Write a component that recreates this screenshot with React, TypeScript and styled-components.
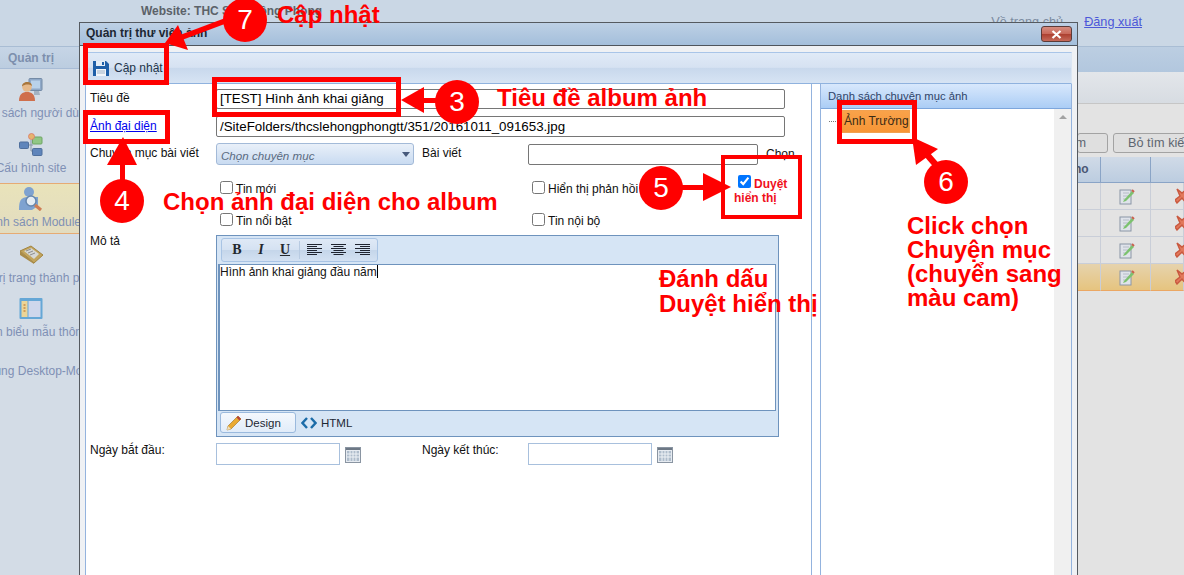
import React from "react";
import styled, { createGlobalStyle, css } from "styled-components";

const SANS = `"Liberation Sans", Arial, sans-serif`;
const SERIF = `"Liberation Serif", serif`;
const RED = "#ff0000";

const Global = createGlobalStyle`
  html, body { margin: 0; padding: 0; background: #e3e3e3; overflow: hidden; }
  body { font-family: ${SANS}; font-size: 12px; color: #000; }
`;

const Page = styled.div`
  position: relative;
  width: 1184px;
  height: 575px;
  overflow: hidden;
  display: flex;
  flex-direction: column;
`;

/* ---------- dimmed page behind the dialog ---------- */
const Header = styled.header`
  height: 47px;
  flex: none;
  background: #cad7e5;
  border-bottom: 1px solid #a9bdd4;
  box-sizing: border-box;
  display: flex;
  align-items: flex-start;
  font-size: 12px;
`;
const SiteName = styled.div`
  margin: 4px 0 0 141px;
  font-weight: bold;
  color: #5c6269;
`;
const HeaderLinks = styled.div`
  margin: 15px 0 0 auto;
  padding-right: 42px;
  display: flex;
  gap: 21px;
`;
const HeaderLink = styled.a`
  color: #4c58d8;
  text-decoration: underline;
  font-size: 12.7px;
`;
const HomeLink = styled(HeaderLink)`
  color: #7b8ba0;
  text-decoration: none;
`;
const Lower = styled.div`
  flex: 1;
  display: flex;
  min-height: 0;
`;
const Sidebar = styled.aside`
  width: 79px;
  flex: none;
  background: #d3dce6;
  overflow: hidden;
`;
const SideTab = styled.div`
  height: 22px;
  padding: 4px 0 0 8px;
  box-sizing: border-box;
  background: linear-gradient(#c6d5e6, #bccde0);
  border-bottom: 1px solid #a8bcd6;
  color: #7d8fad;
  font-weight: bold;
  font-size: 12px;
`;
const SideItem = styled.div<{ $h: number; $pt?: number; $active?: boolean }>`
  width: 62px;
  height: ${(p) => p.$h}px;
  display: flex;
  flex-direction: column;
  align-items: center;
  box-sizing: border-box;
  padding-top: ${(p) => p.$pt ?? 9}px;
  position: relative;
  ${(p) =>
    p.$active &&
    css`
      z-index: 0;
      &::before {
        content: "";
        position: absolute;
        z-index: -1;
        left: 0;
        top: 0;
        bottom: 0;
        width: 79px;
        box-sizing: border-box;
        background: linear-gradient(#e9e3ba, #e2dcc0);
        border-top: 1px solid #e6ab74;
        border-bottom: 1px solid #e6ab74;
      }
    `}
`;
const SideLabel = styled.span`
  white-space: nowrap;
  color: #7f90b5;
  font-size: 12px;
  line-height: 14px;
  margin-top: 4px;
  flex: none;
`;
const SideIcon = styled.svg`
  width: 24px;
  height: 24px;
  flex: none;
  margin-left: -1px;
`;
const Main = styled.main`
  flex: 1;
  min-width: 0;
  display: flex;
  flex-direction: column;
  align-items: flex-end;
  background: #e3e3e3;
`;
const BlueBar = styled.div`
  align-self: stretch;
  height: 25px;
  flex: none;
  background: linear-gradient(#bccee2, #b2c7de);
`;
const GreyBar = styled.div`
  align-self: stretch;
  height: 31px;
  flex: none;
  background: linear-gradient(#e3e6ea, #d7dce2);
  border-bottom: 1px solid #c6c6c6;
`;
const Tools = styled.div`
  display: flex;
  gap: 5px;
  margin-top: 29px;
  width: 107px;
  flex: none;
`;
const GhostButton = styled.div`
  height: 20px;
  flex: none;
  box-sizing: border-box;
  border: 1px solid #a3a3a3;
  border-radius: 3px;
  background: #dfdfdf;
  color: #5d6570;
  font-size: 12.7px;
  line-height: 18px;
  white-space: nowrap;
`;
const FindBtn = styled(GhostButton)`
  width: 31px;
  display: flex;
  justify-content: flex-end;
  padding-right: 21px;
`;
const ClearBtn = styled(GhostButton)`
  width: 90px;
  padding-left: 14px;
  overflow: hidden;
`;
const Table = styled.div`
  width: 107px;
  margin-top: 4px;
  flex: none;
  display: grid;
  grid-template-columns: 24px 50px 33px;
`;
const HeadCell = styled.div`
  height: 26px;
  box-sizing: border-box;
  background: linear-gradient(#d0dae7, #bccde0);
  border-right: 1px solid #8aa4c6;
  border-bottom: 1px solid #8aa4c6;
  color: #4a5873;
  font-weight: bold;
  font-size: 12px;
  line-height: 25px;
  overflow: hidden;
  text-indent: -3px;
  &:nth-child(3) { border-right: 0; }
`;
const Cell = styled.div<{ $sel?: boolean }>`
  height: 27px;
  box-sizing: border-box;
  display: flex;
  align-items: center;
  border-right: 1px solid #c9ced8;
  border-bottom: 1px solid ${(p) => (p.$sel ? "#eba763" : "#c9ced8")};
  background: ${(p) => (p.$sel ? "linear-gradient(#e6d3ad, #e6c47f)" : "#e3e3e3")};
`;
const EditIcon = styled.svg`
  width: 16px;
  height: 17px;
  margin-left: 18px;
`;
const DelIcon = styled.svg`
  width: 16px;
  height: 16px;
  margin-left: 24px;
  flex: none;
`;

/* ---------- dialog ---------- */
const Dialog = styled.section`
  position: absolute;
  left: 79px;
  top: 22px;
  width: 999px;
  height: 560px;
  box-sizing: border-box;
  border: 1px solid #555a60;
  display: flex;
  flex-direction: column;
  background: #eff1f4;
`;
const TitleBar = styled.div`
  height: 23px;
  flex: none;
  box-sizing: border-box;
  padding: 3px 6px 0 6px;
  display: flex;
  align-items: flex-start;
  justify-content: space-between;
  background: linear-gradient(#bdd0e5, #a4bfdb);
  border-bottom: 1px solid #4f555c;
`;
const DialogTitle = styled.div`
  font-weight: bold;
  font-size: 12px;
  line-height: 14px;
  color: #1c2733;
`;
const CloseBtn = styled.div`
  width: 31px;
  height: 16px;
  margin-right: -1px;
  box-sizing: border-box;
  border: 1px solid #5c3b38;
  border-radius: 3px;
  background: linear-gradient(#d58d80 0%, #c9695a 48%, #ad4030 52%, #c56a5a 100%);
  display: flex;
  align-items: center;
  justify-content: center;
`;
const DialogInner = styled.div`
  flex: 1;
  min-height: 0;
  margin: 6px 5px 0 5px;
  display: flex;
  flex-direction: column;
`;
const ToolBar = styled.div`
  height: 32px;
  flex: none;
  box-sizing: border-box;
  border-top: 1px solid #a9c5e8;
  border-left: 1px solid #dbe6f3;
  border-right: 1px solid #dbe6f3;
  border-bottom: 1px solid #8fb2de;
  background: linear-gradient(#e0eaf7 0%, #d6e2f2 48%, #c8d8ec 50%, #d7e4f4 100%);
  display: flex;
  align-items: center;
  padding-left: 7px;
  gap: 5px;
  font-size: 12px;
  color: #23344a;
`;
const SaveIcon = styled.svg`
  width: 16px;
  height: 16px;
  margin-top: -1px;
`;
const Columns = styled.div`
  flex: 1;
  min-height: 0;
  display: flex;
  background: #fff;
  border-left: 1px solid #94b3de;
  border-right: 1px solid #94b3de;
`;
const FormPane = styled.div`
  width: 726px;
  flex: none;
  box-sizing: border-box;
  border-right: 1px solid #94b3de;
  padding: 5px 0 0 4px;
  display: flex;
  flex-direction: column;
`;
const Row = styled.div<{ $h: number; $mt?: number }>`
  display: grid;
  grid-template-columns: 126px 206px 106px 206px auto;
  height: ${(p) => p.$h}px;
  margin-top: ${(p) => p.$mt ?? 0}px;
  flex: none;
  align-items: start;
`;
const Label = styled.div<{ $off?: number }>`
  font-size: 12px;
  line-height: 16px;
  color: #101010;
  white-space: nowrap;
  margin-top: ${(p) => p.$off ?? 2}px;
`;
const LinkLabel = styled(Label)`
  color: #0000ee;
  text-decoration: underline;
`;
const TextInput = styled.div<{ $h: number }>`
  height: ${(p) => p.$h}px;
  box-sizing: border-box;
  border: 1px solid #767676;
  border-radius: 2px;
  padding: 0 3px;
  font-size: 13.333px;
  line-height: ${(p) => p.$h - 2}px;
  color: #000;
  white-space: nowrap;
`;
const WideCell = styled.div`
  grid-column: 2 / span 4;
  width: 569px;
`;
const Select = styled.div`
  width: 198px;
  height: 22px;
  box-sizing: border-box;
  border: 1px solid #a3bad8;
  border-radius: 3px;
  background: linear-gradient(#e9f0f9, #c9dbf1);
  font-style: italic;
  font-size: 11.6px;
  line-height: 24px;
  color: #5a6a80;
  padding-left: 4px;
  position: relative;
  &::after {
    content: "";
    position: absolute;
    right: 3px;
    top: 8px;
    border: 4px solid transparent;
    border-top: 5px solid #475a7c;
    border-bottom: 0;
  }
`;
const PostPick = styled.div`
  grid-column: 4 / span 2;
  display: flex;
  align-items: flex-start;
  gap: 8px;
  margin-top: 1px;
`;
const PostInput = styled(TextInput)`
  width: 230px;
  flex: none;
`;
const Check = styled.label`
  display: flex;
  align-items: flex-start;
  gap: 3px;
  padding-left: 4px;
  font-size: 12px;
  line-height: 16px;
  white-space: nowrap;
  color: #101010;
  input { margin: 2px 0 0; width: 13px; height: 13px; flex: none; }
  span { padding-top: 2px; }
`;
const ApproveCell = styled.div`
  font-size: 12px;
  line-height: 14px;
  color: #f0101c;
  font-weight: bold;
  margin-top: -4px;
  width: 60px;
  input { margin: 0 3px 0 4px; width: 13px; height: 13px; vertical-align: baseline; }
`;
const Editor = styled.div`
  grid-column: 2 / span 4;
  width: 563px;
  height: 202px;
  box-sizing: border-box;
  border: 1px solid #6e93bd;
  background: #d6e5f5;
  display: flex;
  flex-direction: column;
`;
const EditorTools = styled.div`
  width: 157px;
  height: 24px;
  margin: 2px 0 2px 4px;
  flex: none;
  box-sizing: border-box;
  border: 1px solid #a9c4e4;
  border-radius: 3px;
  background: linear-gradient(#dfe9f6 0%, #d5e2f2 48%, #c5d6ea 52%, #d3e1f2 100%);
  display: flex;
  align-items: center;
  padding-left: 3px;
`;
const EdBtn = styled.span`
  width: 24px;
  flex: none;
  font-family: ${SERIF};
  font-size: 14px;
  font-weight: bold;
  text-align: center;
  color: #24282e;
`;
const Sep = styled.span`
  width: 1px;
  height: 18px;
  background: #b8cbe2;
  margin: 0 7px 0 2px;
  flex: none;
`;
const AlignIcon = styled.svg`
  width: 15px;
  height: 12px;
  margin-right: 9px;
  flex: none;
`;
const EditArea = styled.div`
  flex: 1;
  margin: 0 2px 0 1px;
  background: #fff;
  border: 1px solid #6e93bd;
  border-left-width: 2px;
  font-size: 12px;
  line-height: 14px;
  color: #141414;
`;
const Caret = styled.span`
  display: inline-block;
  width: 1px;
  height: 13px;
  background: #000;
  vertical-align: -2px;
`;
const ModeBar = styled.div`
  height: 25px;
  flex: none;
  display: flex;
  align-items: flex-start;
  padding: 1px 0 0 3px;
  gap: 5px;
  box-sizing: border-box;
`;
const ModeDesign = styled.div`
  width: 76px;
  height: 21px;
  box-sizing: border-box;
  border: 1px solid #9ab9dd;
  border-radius: 3px;
  background: linear-gradient(#f4f8fd, #e1ecf9);
  display: flex;
  align-items: center;
  gap: 3px;
  padding-left: 5px;
  color: #1c2733;
  font-size: 11.5px;
`;
const ModeHtml = styled.div`
  display: flex;
  align-items: center;
  gap: 4px;
  height: 21px;
  color: #1c2733;
  font-size: 11.5px;
`;
const DateCell = styled.div`
  display: flex;
  align-items: flex-start;
  gap: 5px;
`;
const DateInput = styled.div`
  width: 124px;
  height: 22px;
  box-sizing: border-box;
  border: 1px solid #a8c0dd;
  background: #fff;
`;
const CalIcon = styled.svg`
  width: 16px;
  height: 16px;
  margin-top: 4px;
  flex: none;
`;
const CatPane = styled.div`
  width: 251px;
  margin-left: 8px;
  flex: none;
  box-sizing: border-box;
  border-left: 1px solid #94b3de;
  display: flex;
  flex-direction: column;
`;
const CatHead = styled.div`
  height: 25px;
  flex: none;
  box-sizing: border-box;
  background: linear-gradient(#d8e8fc, #abcdf5);
  border-bottom: 1px solid #7da6dc;
  padding: 6px 0 0 7px;
  font-size: 11.25px;
  line-height: 13px;
  color: #2f4368;
`;
const CatBody = styled.div`
  flex: 1;
  display: flex;
  min-height: 0;
`;
const Tree = styled.div`
  flex: 1;
  display: flex;
  align-items: flex-start;
  padding: 1px 0 0 8px;
`;
const Dots = styled.span`
  width: 11px;
  margin-top: 11px;
  border-top: 1px dotted #777;
  flex: none;
`;
const Node = styled.div`
  width: 70px;
  height: 23px;
  box-sizing: border-box;
  background: linear-gradient(#f9a24a, #f79636);
  border: 1px solid #f2a14f;
  font-size: 12px;
  line-height: 21px;
  padding-left: 3px;
  color: #3b2a14;
  white-space: nowrap;
`;
const Scroll = styled.div`
  width: 17px;
  flex: none;
  background: #f0f0f0;
  position: relative;
  &::before {
    content: "";
    position: absolute;
    left: 5px;
    top: 6px;
    border: 4px solid transparent;
    border-bottom: 4px solid #a3a3a3;
    border-top: 0;
  }
`;

/* ---------- red annotations ---------- */
const Marks = styled.svg`
  position: absolute;
  inset: 0;
  width: 1184px;
  height: 575px;
  pointer-events: none;
`;
const RedBox = styled.div<{ $x: number; $y: number; $w: number; $h: number; $b?: number }>`
  position: absolute;
  left: ${(p) => p.$x}px;
  top: ${(p) => p.$y}px;
  width: ${(p) => p.$w}px;
  height: ${(p) => p.$h}px;
  box-sizing: border-box;
  border: ${(p) => p.$b ?? 5}px solid ${RED};
`;
const Bubble = styled.div<{ $x: number; $y: number }>`
  position: absolute;
  left: ${(p) => p.$x - 22}px;
  top: ${(p) => p.$y - 22}px;
  width: 44px;
  height: 44px;
  border-radius: 50%;
  background: ${RED};
  color: #fff;
  font-size: 28px;
  line-height: 44px;
  text-align: center;
`;
const Note = styled.div<{ $x: number; $y: number; $lh?: number }>`
  position: absolute;
  left: ${(p) => p.$x}px;
  top: ${(p) => p.$y}px;
  color: ${RED};
  font-weight: bold;
  font-size: 24px;
  line-height: ${(p) => p.$lh ?? 26}px;
  white-space: pre;
`;

/* ---------- icons ---------- */
const UserIcon = () => (
  <SideIcon viewBox="0 0 24 24">
    <rect x="10" y="0.500" width="13" height="12" rx="1" fill="#8fa9c8" stroke="#748ba6" />
    <rect x="12" y="2.500" width="9" height="8" fill="#b9d2ea" />
    <path d="M15 13h5l1 4h-6z" fill="#a3b2c2" />
    <circle cx="8" cy="9" r="4.800" fill="#e6b98a" />
    <path d="M3 8.500C3 2.500 13 2.500 13 8 10 6 6 6 3 8.500z" fill="#a8763c" />
    <path d="M0 23c0-7 3.500-9 8-9s8 2 8 9z" fill="#cf6f4c" />
  </SideIcon>
);
const NetIcon = () => (
  <SideIcon viewBox="0 0 24 24">
    <path d="M9 12h5M12 7v11M12 18h2" stroke="#8595a8" fill="none" />
    <rect x="0.500" y="9" width="9" height="6.500" rx="1" fill="#5f85bb" stroke="#4f6f9c" />
    <rect x="13.500" y="4" width="9.500" height="7" rx="1" fill="#90c785" stroke="#6fa564" />
    <rect x="13.500" y="15.500" width="9.500" height="7" rx="1" fill="#5f85bb" stroke="#4f6f9c" />
    <circle cx="12.500" cy="3.500" r="3" fill="#e6b46e" stroke="#d9776a" strokeWidth=".8" />
  </SideIcon>
);
const ModuleIcon = () => (
  <SideIcon viewBox="0 0 24 24">
    <circle cx="10" cy="5" r="5" fill="#7ea2d0" />
    <path d="M0 23c0-8 1-13 9-13h10v9l-6 4z" fill="#7ea2d0" />
    <circle cx="12" cy="14" r="5" fill="#e4ecf4" stroke="#6586ad" strokeWidth="1.500" />
    <path d="M16 18l6 5" stroke="#cf7d55" strokeWidth="3.200" />
  </SideIcon>
);
const TrayIcon = () => (
  <SideIcon viewBox="0 0 24 24">
    <path d="M1 8L12 3l12 9-9 8z" fill="#c2a45c" stroke="#a28540" />
    <path d="M5 8l7-3 8 6-5 5z" fill="#d6d8d6" />
    <path d="M7 8l5-2M9 10l5-2M11 12l5-2" stroke="#8d8d8d" />
    <path d="M1 8v4l14 9v-1z" fill="#a98b48" />
  </SideIcon>
);
const WindowIcon = () => (
  <SideIcon viewBox="0 0 24 24">
    <rect x="0.500" y="1" width="23" height="21" rx="1" fill="#65a7d6" />
    <rect x="2.500" y="4" width="6" height="16" fill="#ecd597" />
    <rect x="9.500" y="4" width="12" height="16" fill="#ced7ec" />
    <path d="M4.500 8h2M4.500 11h2M4.500 14h2" stroke="#c98a46" strokeWidth="1.400" />
  </SideIcon>
);
const Edit = () => (
  <EditIcon viewBox="0 0 16 17">
    <rect x="1" y="2" width="11" height="14" fill="#dfe3ea" stroke="#8a96a6" />
    <path d="M4 5h6M4 8h6M4 11h4" stroke="#b5bcc8" />
    <path d="M5 12l8-9 2 2-8 8-3 1z" fill="#7cc26f" />
    <path d="M13 2l2 2" stroke="#c9614c" strokeWidth="2" />
  </EditIcon>
);
const Del = () => (
  <DelIcon viewBox="0 0 16 16">
    <path d="M2 1l5 4 5-4 3 3-5 5 4 5-3 1-4-5-5 5-2-3 5-4z" fill="#e2795c" stroke="#c9593f" strokeWidth="1.400" />
  </DelIcon>
);
const Cal = () => (
  <CalIcon viewBox="0 0 16 16">
    <rect x=".5" y=".5" width="15" height="15" fill="#e6ebf1" stroke="#8a95a2" />
    <rect x="1" y="1" width="14" height="2" fill="#6d7885" />
    <path d="M2 4h12v10H2z" fill="#aebccb" />
    <path d="M5 4v10M8 4v10M11 4v10M2 7h12M2 10h12" stroke="#eef2f6" />
  </CalIcon>
);
const Align = ({ kind }: { kind: "l" | "c" | "r" }) => {
  const lines = [15, 10, 15, 10, 15, 10];
  return (
    <AlignIcon viewBox="0 0 15 12">
      {lines.map((w, i) => {
        const x = kind === "l" ? 0 : kind === "r" ? 15 - w : (15 - w) / 2;
        return <rect key={i} x={x} y={i * 2} width={w} height="1" fill="#1f2430" />;
      })}
    </AlignIcon>
  );
};

const tableRows = [false, false, false, true];

export default function App() {
  return (
    <Page>
      <Global />
      <Header>
        <SiteName>Website: THC S Lê Hồng Phòng</SiteName>
        <HeaderLinks>
          <HomeLink>Về trang chủ</HomeLink>
          <HeaderLink>Đăng xuất</HeaderLink>
        </HeaderLinks>
      </Header>
      <Lower>
        <Sidebar>
          <SideTab>Quản trị</SideTab>
          <SideItem $h={55}>
            <UserIcon />
            <SideLabel>Danh sách người dùng</SideLabel>
          </SideItem>
          <SideItem $h={59}>
            <NetIcon />
            <SideLabel>Cấu hình site</SideLabel>
          </SideItem>
          <SideItem $h={51} $pt={4} $active>
            <ModuleIcon />
            <SideLabel>Danh sách Module</SideLabel>
          </SideItem>
          <SideItem $h={54}>
            <TrayIcon />
            <SideLabel>Quản trị trang thành phần</SideLabel>
          </SideItem>
          <SideItem $h={54}>
            <WindowIcon />
            <SideLabel>Quản biểu mẫu thông</SideLabel>
          </SideItem>
          <SideItem $h={40} $pt={18}>
            <SideLabel>Ứng dụng Desktop-Mobile</SideLabel>
          </SideItem>
        </Sidebar>
        <Main>
          <BlueBar />
          <GreyBar />
          <Tools>
            <FindBtn>Tìm kiếm</FindBtn>
            <ClearBtn>Bỏ tìm kiếm</ClearBtn>
          </Tools>
          <Table>
            <HeadCell>ho</HeadCell>
            <HeadCell />
            <HeadCell />
            {tableRows.map((sel, i) => (
              <React.Fragment key={i}>
                <Cell $sel={sel} />
                <Cell $sel={sel}>
                  <Edit />
                </Cell>
                <Cell $sel={sel}>
                  <Del />
                </Cell>
              </React.Fragment>
            ))}
          </Table>
        </Main>
      </Lower>

      <Dialog>
        <TitleBar>
          <DialogTitle>Quản trị thư viện ảnh</DialogTitle>
          <CloseBtn>
            <svg width="11" height="9" viewBox="0 0 11 9">
              <path d="M1.5 1l8 7M9.5 1l-8 7" stroke="#fff" strokeWidth="2.2" />
            </svg>
          </CloseBtn>
        </TitleBar>
        <DialogInner>
          <ToolBar>
            <SaveIcon viewBox="0 0 16 16">
              <path d="M0 1h13l3 3v12H0z" fill="#1f5fa8" />
              <rect x="3" y="1" width="9" height="5" fill="#e6eef7" />
              <rect x="9" y="2" width="2" height="3" fill="#1f5fa8" />
              <rect x="3" y="9" width="10" height="7" fill="#f3f6fa" />
              <path d="M4 11h8M4 13h8" stroke="#9fb2c6" />
            </SaveIcon>
            Cập nhật
          </ToolBar>
          <Columns>
            <FormPane>
              <Row $h={20}>
                <Label $off={1}>Tiêu đề</Label>
                <WideCell>
                  <TextInput $h={20}>[TEST] Hình ảnh khai giảng</TextInput>
                </WideCell>
              </Row>
              <Row $h={21} $mt={7}>
                <LinkLabel>Ảnh đại diện</LinkLabel>
                <WideCell>
                  <TextInput $h={21}>/SiteFolders/thcslehongphongtt/351/20161011_091653.jpg</TextInput>
                </WideCell>
              </Row>
              <Row $h={22} $mt={6}>
                <Label>Chuyên mục bài viết</Label>
                <Select>Chọn chuyên mục</Select>
                <Label>Bài viết</Label>
                <PostPick>
                  <PostInput $h={21} />
                  <Label>Chọn</Label>
                </PostPick>
              </Row>
              <Row $h={26} $mt={14}>
                <span />
                <Check>
                  <input type="checkbox" readOnly />
                  <span>Tin mới</span>
                </Check>
                <span />
                <Check>
                  <input type="checkbox" readOnly />
                  <span>Hiển thị phản hồi</span>
                </Check>
                <ApproveCell>
                  <input type="checkbox" checked readOnly />
                  Duyệt hiển thị
                </ApproveCell>
              </Row>
              <Row $h={24} $mt={6}>
                <span />
                <Check>
                  <input type="checkbox" readOnly />
                  <span>Tin nổi bật</span>
                </Check>
                <span />
                <Check>
                  <input type="checkbox" readOnly />
                  <span>Tin nội bộ</span>
                </Check>
              </Row>
              <Row $h={202}>
                <Label $off={-2}>Mô tả</Label>
                <Editor>
                  <EditorTools>
                    <EdBtn>B</EdBtn>
                    <EdBtn>
                      <i>I</i>
                    </EdBtn>
                    <EdBtn>
                      <u>U</u>
                    </EdBtn>
                    <Sep />
                    <Align kind="l" />
                    <Align kind="c" />
                    <Align kind="r" />
                  </EditorTools>
                  <EditArea>
                    Hình ảnh khai giảng đầu năm
                    <Caret />
                  </EditArea>
                  <ModeBar>
                    <ModeDesign>
                      <svg width="16" height="16" viewBox="0 0 16 16">
                        <path d="M1 15l1-4L12 1l3 3L5 14z" fill="#eaaa32" stroke="#9a7020" strokeWidth=".6" />
                        <path d="M12 1l3 3-1.5 1.5-3-3z" fill="#b6423c" />
                        <path d="M1 15l1-4 3 3z" fill="#efe0c0" />
                      </svg>
                      Design
                    </ModeDesign>
                    <ModeHtml>
                      <svg width="16" height="12" viewBox="0 0 16 12">
                        <path d="M6 1L1.5 6 6 11M10 1l4.5 5L10 11" stroke="#1c6ca8" strokeWidth="2.4" fill="none" />
                      </svg>
                      HTML
                    </ModeHtml>
                  </ModeBar>
                </Editor>
              </Row>
              <Row $h={22} $mt={6}>
                <Label $off={-1}>Ngày bắt đầu:</Label>
                <DateCell>
                  <DateInput />
                  <Cal />
                </DateCell>
                <Label $off={-1}>Ngày kết thúc:</Label>
                <DateCell>
                  <DateInput />
                  <Cal />
                </DateCell>
              </Row>
            </FormPane>
            <CatPane>
              <CatHead>Danh sách chuyên mục ảnh</CatHead>
              <CatBody>
                <Tree>
                  <Dots />
                  <Node>Ảnh Trường</Node>
                </Tree>
                <Scroll />
              </CatBody>
            </CatPane>
          </Columns>
        </DialogInner>
      </Dialog>

      <Marks viewBox="0 0 1184 575">
        <g fill={RED} stroke="none">
          <path d="M165 43L178 25L188 50z" />
          <path d="M180 35L228 17L230 22L182 40z" />
          <path d="M401 100L424 87V113z" />
          <rect x="420" y="98" width="20" height="5" />
          <path d="M123 137L107 165H137z" />
          <rect x="120" y="160" width="5" height="25" />
          <path d="M731 187L703 173V201z" />
          <rect x="680" y="185" width="28" height="5" />
          <path d="M912 137L916 165L938 149z" />
          <path d="M924 156L929 152L942 167L937 171z" />
        </g>
      </Marks>
      <RedBox $x={83} $y={43} $w={86} $h={42} />
      <RedBox $x={212} $y={77} $w={189} $h={40} />
      <RedBox $x={83} $y={110} $w={87} $h={34} />
      <RedBox $x={721} $y={155} $w={81} $h={64} $b={4} />
      <RedBox $x={837} $y={100} $w={80} $h={44} />
      <Bubble $x={245} $y={20}>7</Bubble>
      <Bubble $x={457} $y={102}>3</Bubble>
      <Bubble $x={122} $y={201}>4</Bubble>
      <Bubble $x={661} $y={188}>5</Bubble>
      <Bubble $x={946} $y={182}>6</Bubble>
      <Note $x={277} $y={2}>Cập nhật</Note>
      <Note $x={497} $y={85}>Tiêu đề album ảnh</Note>
      <Note $x={163} $y={189}>Chọn ảnh đại diện cho album</Note>
      <Note $x={659} $y={266} $lh={25}>{"Đánh dấu\nDuyệt hiển thị"}</Note>
      <Note $x={907} $y={214} $lh={24}>{"Click chọn\nChuyện mục\n(chuyển sang\nmàu cam)"}</Note>
    </Page>
  );
}
